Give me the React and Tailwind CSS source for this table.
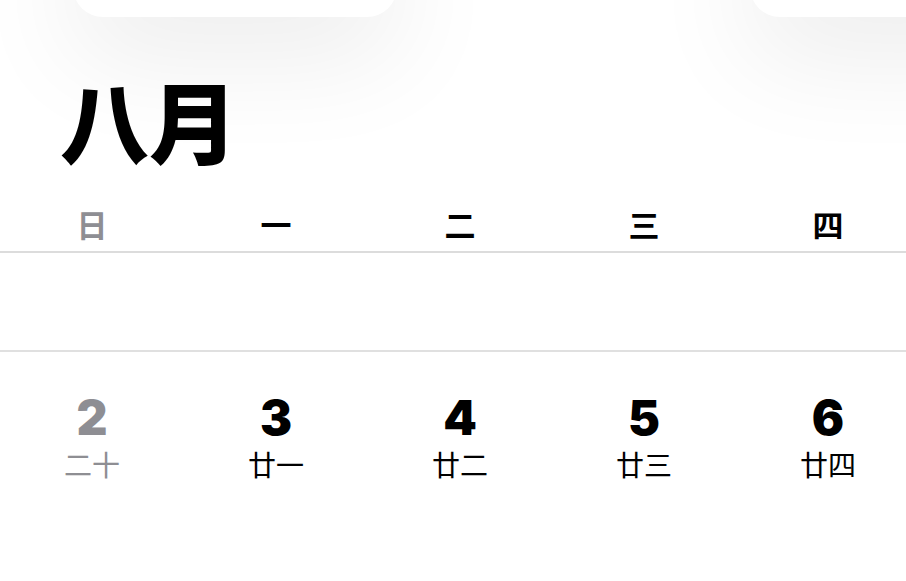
export default function App() {
  const cjk = { fontFamily: '"Noto Sans CJK SC", "Noto Sans", sans-serif' };
  const weekdays = ["日", "一", "二", "三", "四", "五", "六"];
  const days = [
    { n: "2", l: "二十", gray: true },
    { n: "3", l: "廿一" },
    { n: "4", l: "廿二" },
    { n: "5", l: "廿三" },
    { n: "6", l: "廿四" },
    { n: "7", l: "廿五" },
    { n: "8", l: "廿六" },
  ];
  return (
    <div className="w-[906px] h-[581px] overflow-hidden bg-white relative" style={cjk}>
      <div className="flex pl-[73px] gap-[353px] -mt-[103px]">
        <div className="w-[324px] h-[120px] shrink-0 rounded-[30px] bg-white shadow-[0_40px_110px_rgba(0,0,0,0.075)]" />
        <div className="w-[324px] h-[120px] shrink-0 rounded-[30px] bg-white shadow-[0_40px_110px_rgba(0,0,0,0.075)]" />
      </div>
      <div className="relative pl-[60px] mt-[57px] text-[89px] leading-none font-black text-black">
        八月
      </div>
      <div className="relative mt-[38px] grid grid-cols-[repeat(7,184px)] w-[1288px] h-[52px] pb-[6px] items-center border-b-2 border-[#dcdcdc]">
        {weekdays.map((w, i) => (
          <div
            key={w}
            className={`text-center text-[31px] leading-none font-bold ${i === 0 ? "text-[#8e8e93]" : "text-black"}`}
          >
            {w}
          </div>
        ))}
      </div>
      <div className="h-[99px] w-[1288px] border-b-2 border-[#e0e0e0]" />
      <div className="grid grid-cols-[repeat(7,184px)] w-[1288px] pt-[42px]">
        {days.map((d) => (
          <div key={d.n} className={`flex flex-col items-center ${d.gray ? "text-[#8e8e93]" : "text-black"}`}>
            <div
              className="text-[48px] leading-none font-black"
              style={{ fontFamily: '"Inter", "Liberation Sans", sans-serif' }}
            >
              {d.n}
            </div>
            <div className="mt-[8px] text-[28px] leading-none">{d.l}</div>
          </div>
        ))}
      </div>
    </div>
  );
}
